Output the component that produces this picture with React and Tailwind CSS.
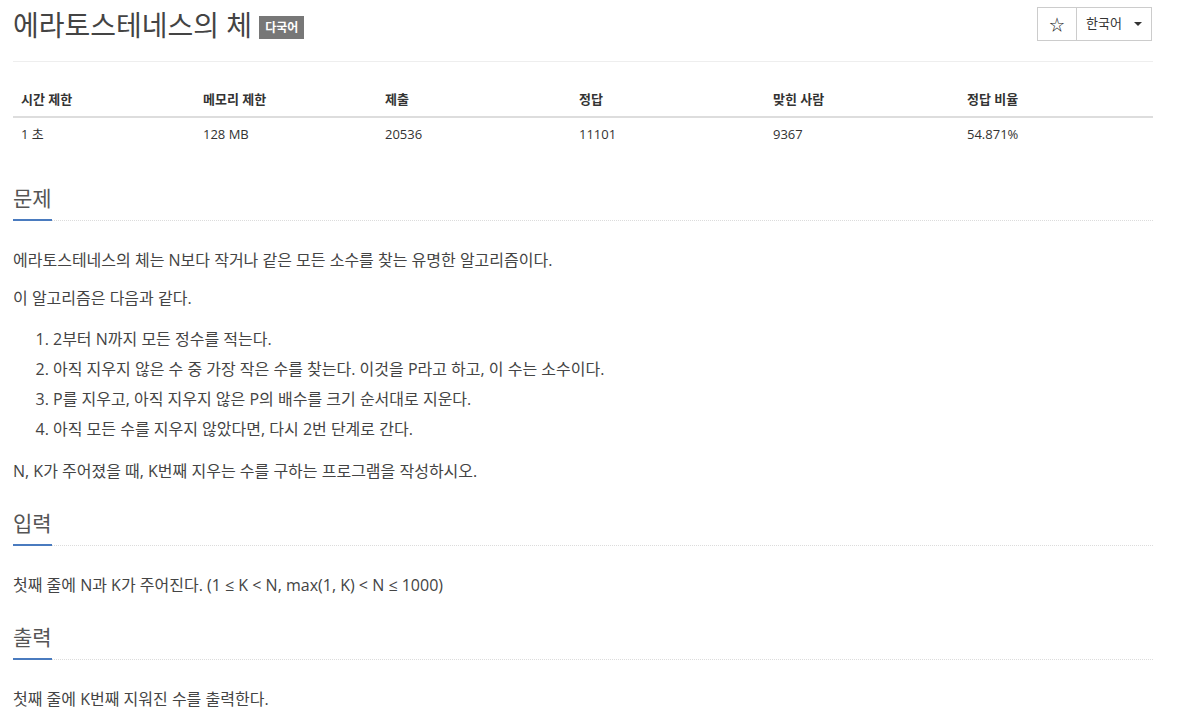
import React from "react";

const F = "[font-family:'Open_Sans','Noto_Sans_CJK_KR',sans-serif]";

function Heading({ children }) {
  return (
    <div className="flex border-b border-dotted border-[#dcdcdc]">
      <span className="-mb-px border-b-2 border-[#4a7bbf] pb-[6px] text-[21px] leading-[30px] text-[#555]">
        {children}
      </span>
    </div>
  );
}

export default function App() {
  const cols = ["시간 제한", "메모리 제한", "제출", "정답", "맞힌 사람", "정답 비율"];
  const vals = ["1 초", "128 MB", "20536", "11101", "9367", "54.871%"];
  return (
    <div className={`${F} bg-white w-[1182px] h-[720px] overflow-hidden text-[#333]`}>
      <div className="pl-[13px] w-[1153px]">
        {/* header */}
        <div className="flex items-start justify-between pt-[7px] pb-[18px] border-b border-[#eee]">
          <div className="flex items-center h-[36px]">
            <h1 className="text-[28px] leading-[36px] text-[#444] font-normal">에라토스테네스의 체</h1>
            <span className="ml-[7px] mt-[4px] bg-[#777] text-white text-[12px] font-bold leading-[23px] px-[6px] h-[23px]">
              다국어
            </span>
          </div>
          <div className="flex h-[34px] border border-[#ccc] mr-px">
            <div className="w-[39px] flex items-center justify-center text-[15px] border-r border-[#ccc] text-[#222]">
              ☆
            </div>
            <div className="w-[74px] flex items-center pl-[9px] text-[13px] text-[#333]">
              한국어
              <span className="ml-[12px] w-0 h-0 border-l-[4px] border-r-[4px] border-t-[4px] border-l-transparent border-r-transparent border-t-[#333]"></span>
            </div>
          </div>
        </div>

        {/* table */}
        <div className="mt-[19px] text-[13px]">
          <div className="grid grid-cols-[182px_182px_194px_194px_194px_1fr] border-b-2 border-[#ddd]">
            {cols.map((c) => (
              <div key={c} className="pl-[8px] pt-[8px] pb-[7px] leading-[20px] font-bold">
                {c}
              </div>
            ))}
          </div>
          <div className="grid grid-cols-[182px_182px_194px_194px_194px_1fr]">
            {vals.map((v) => (
              <div key={v} className="pl-[8px] pt-[6px] pb-[8px] leading-[20px]">
                {v}
              </div>
            ))}
          </div>
        </div>

        {/* 문제 */}
        <div className="mt-[31px]">
          <Heading>문제</Heading>
        </div>
        <div className="mt-[25px] text-[16px] text-[#444]">
          <p className="leading-[28px] mb-[10px]">
            에라토스테네스의 체는 N보다 작거나 같은 모든 소수를 찾는 유명한 알고리즘이다.
          </p>
          <p className="leading-[28px] mb-[12px]">이 알고리즘은 다음과 같다.</p>
          <ol className="list-decimal pl-[40px] mb-[12px]">
            <li className="leading-[30px]">2부터 N까지 모든 정수를 적는다.</li>
            <li className="leading-[30px]">
              아직 지우지 않은 수 중 가장 작은 수를 찾는다. 이것을 P라고 하고, 이 수는 소수이다.
            </li>
            <li className="leading-[30px]">P를 지우고, 아직 지우지 않은 P의 배수를 크기 순서대로 지운다.</li>
            <li className="leading-[31px]">아직 모든 수를 지우지 않았다면, 다시 2번 단계로 간다.</li>
          </ol>
          <p className="leading-[28px] mb-[10px]">
            N, K가 주어졌을 때, K번째 지우는 수를 구하는 프로그램을 작성하시오.
          </p>
        </div>

        {/* 입력 */}
        <div className="mt-[23px]">
          <Heading>입력</Heading>
        </div>
        <div className="mt-[25px] text-[16px] text-[#444]">
          <p className="leading-[28px] mb-[10px]">
            첫째 줄에 N과 K가 주어진다. (1 ≤ K &lt; N, max(1, K) &lt; N ≤ 1000)
          </p>
        </div>

        {/* 출력 */}
        <div className="mt-[23px]">
          <Heading>출력</Heading>
        </div>
        <div className="mt-[25px] text-[16px] text-[#444]">
          <p className="leading-[28px] mb-[10px]">첫째 줄에 K번째 지워진 수를 출력한다.</p>
        </div>
      </div>
    </div>
  );
}
